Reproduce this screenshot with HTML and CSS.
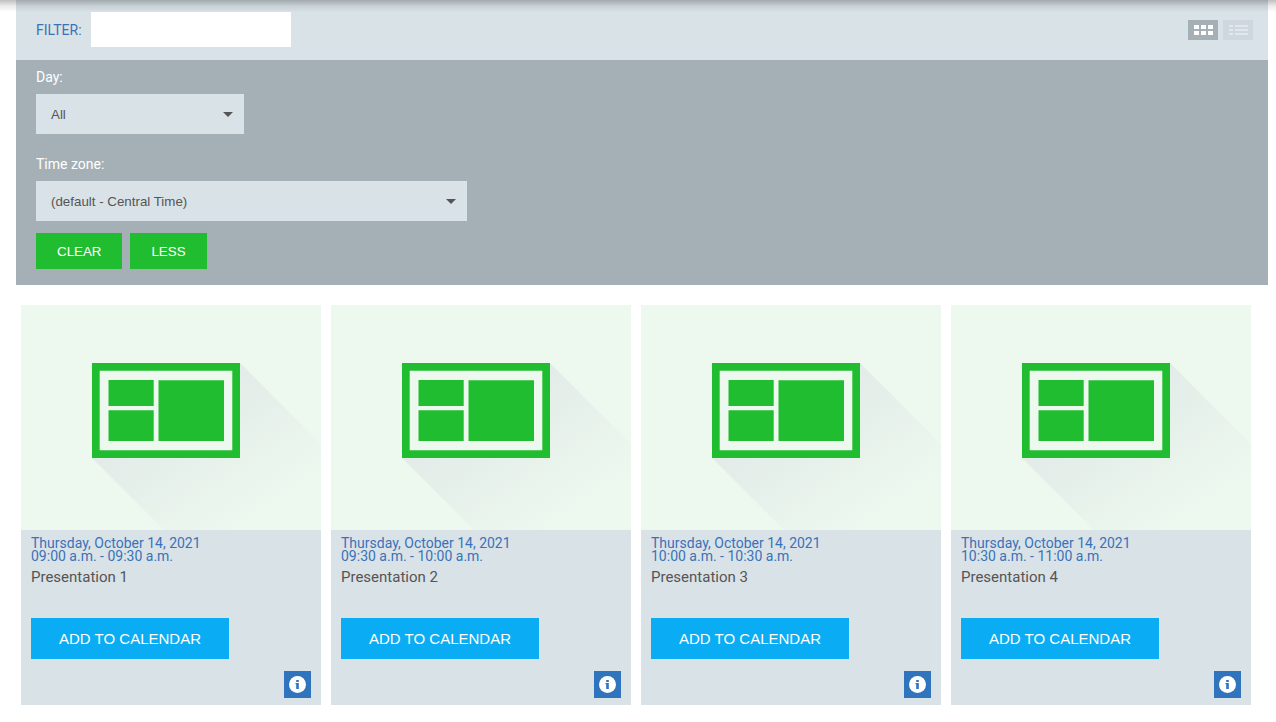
FILE: index.html
```html
<!DOCTYPE html>
<html lang="en">
<head>
<meta charset="utf-8">
<title>Presentations</title>
<link rel="stylesheet" href="styles.css">
</head>
<body>
<svg class="defs" aria-hidden="true">
  <defs>
    <linearGradient id="fade" gradientUnits="userSpaceOnUse" x1="145" y1="105" x2="225" y2="225">
      <stop offset="0" stop-color="#e2ebe8"/>
      <stop offset="1" stop-color="#edf9ef"/>
    </linearGradient>
    <symbol id="board" viewBox="0 0 300 225">
      <path fill="url(#fade)" d="M71 153 219 58 300 139V225H143z"/>
      <path fill="#21bd30" d="M71 58h148v95H71z"/>
      <path fill="#edf9ef" d="M78.700 65.700h132.600v79.600H78.700z"/>
      <path fill="#21bd30" d="M87.500 75h45.200v26H87.500zM87.500 105.200h45.200v30.800H87.500zM137.500 75.200h65.500v60.800h-65.500z"/>
    </symbol>
    <symbol id="info" viewBox="0 0 17 17">
      <circle cx="8.500" cy="8.500" r="8.500" fill="#fff"/>
      <path fill="#2f74bd" d="M7.200 4h2.600v2H7.200zM6.500 7h3.300v6H7.200V8.300h-.7z"/>
    </symbol>
  </defs>
</svg>
<div class="top-shadow"></div>
<main class="page">
  <header class="filter-bar">
    <label class="filter-label" for="filter">FILTER:</label>
    <input class="filter-input" id="filter" type="text">
    <div class="views">
      <button class="view view-active" type="button" aria-label="Grid view">
        <svg width="30" height="20" viewBox="0 0 30 20"><path fill="#fff" d="M6 5h5v4H6zM13 5h5v4h-5zM20 5h5v4h-5zM6 11h5v4H6zM13 11h5v4h-5zM20 11h5v4h-5z"/></svg>
      </button>
      <button class="view" type="button" aria-label="List view">
        <svg width="30" height="20" viewBox="0 0 30 20"><path fill="#e0e8ec" d="M6 5h4v2H6zM12 5h13v2H12zM6 9h4v2H6zM12 9h13v2H12zM6 13h4v2H6zM12 13h13v2H12z"/></svg>
      </button>
    </div>
  </header>
  <section class="options">
    <label class="option-label" for="day">Day:</label>
    <div class="select-box select-day"><select class="select" id="day"><option>All</option></select></div>
    <label class="option-label" for="zone">Time zone:</label>
    <div class="select-box select-zone"><select class="select" id="zone"><option>(default - Central Time)</option></select></div>
    <div class="actions">
      <button class="action" type="button">CLEAR</button>
      <button class="action" type="button">LESS</button>
    </div>
  </section>
  <section class="cards">
    <article class="card">
      <svg class="card-image" viewBox="0 0 300 225"><use href="#board"/></svg>
      <div class="card-body">
        <div class="card-time">Thursday, October 14, 2021<br>09:00 a.m. - 09:30 a.m.</div>
        <h2 class="card-title">Presentation 1</h2>
        <button class="add" type="button">ADD TO CALENDAR</button>
        <button class="info" type="button" aria-label="Details"><svg width="17" height="17"><use href="#info"/></svg></button>
      </div>
    </article>
    <article class="card">
      <svg class="card-image" viewBox="0 0 300 225"><use href="#board"/></svg>
      <div class="card-body">
        <div class="card-time">Thursday, October 14, 2021<br>09:30 a.m. - 10:00 a.m.</div>
        <h2 class="card-title">Presentation 2</h2>
        <button class="add" type="button">ADD TO CALENDAR</button>
        <button class="info" type="button" aria-label="Details"><svg width="17" height="17"><use href="#info"/></svg></button>
      </div>
    </article>
    <article class="card">
      <svg class="card-image" viewBox="0 0 300 225"><use href="#board"/></svg>
      <div class="card-body">
        <div class="card-time">Thursday, October 14, 2021<br>10:00 a.m. - 10:30 a.m.</div>
        <h2 class="card-title">Presentation 3</h2>
        <button class="add" type="button">ADD TO CALENDAR</button>
        <button class="info" type="button" aria-label="Details"><svg width="17" height="17"><use href="#info"/></svg></button>
      </div>
    </article>
    <article class="card">
      <svg class="card-image" viewBox="0 0 300 225"><use href="#board"/></svg>
      <div class="card-body">
        <div class="card-time">Thursday, October 14, 2021<br>10:30 a.m. - 11:00 a.m.</div>
        <h2 class="card-title">Presentation 4</h2>
        <button class="add" type="button">ADD TO CALENDAR</button>
        <button class="info" type="button" aria-label="Details"><svg width="17" height="17"><use href="#info"/></svg></button>
      </div>
    </article>
  </section>
</main>
</body>
</html>
```
FILE: styles.css
```css
* {
  box-sizing: border-box;
}

body {
  margin: 0;
  background: #fff;
  color: #555;
  font-family: Roboto, "Liberation Sans", sans-serif;
  font-size: 14px;
}

button,
input,
select {
  margin: 0;
  padding: 0;
  border: 0;
  border-radius: 0;
  font-family: "Liberation Sans", Arial, sans-serif;
}

button {
  cursor: pointer;
}

.defs {
  position: absolute;
  width: 0;
  height: 0;
}

.top-shadow {
  position: fixed;
  top: 0;
  left: 0;
  right: 0;
  height: 12px;
  background: linear-gradient(rgba(0, 0, 0, 0.25), rgba(0, 0, 0, 0.08) 50%, rgba(0, 0, 0, 0));
  pointer-events: none;
}

.page {
  margin: 0 8px 0 16px;
}

.filter-bar {
  display: flex;
  align-items: center;
  padding: 12px 15px 13px 20px;
  background: #d9e2e7;
}

.filter-label {
  margin-right: 9px;
  color: #3a72b8;
}

.filter-input {
  width: 200px;
  height: 35px;
  padding: 0 10px;
  background: #fff;
}

.views {
  display: flex;
  gap: 5px;
  margin-left: auto;
}

.view {
  display: flex;
  background: #cdd7dd;
}

.view-active {
  background: #a4b0b6;
}

.options {
  padding: 9px 20px 16px;
  background: #a4b0b6;
}

.option-label {
  display: block;
  margin-bottom: 9px;
  color: #fff;
  line-height: 16px;
}

.select-box {
  position: relative;
  max-width: 100%;
}

.select-box::after {
  content: "";
  position: absolute;
  top: 18px;
  right: 11px;
  border: 5px solid transparent;
  border-top-color: #555;
  border-bottom: 0;
  pointer-events: none;
}

.select-day {
  width: 208px;
  margin-bottom: 22px;
}

.select-zone {
  width: 431px;
  margin-bottom: 12px;
}

.select {
  display: block;
  width: 100%;
  height: 40px;
  padding: 0 30px 0 15px;
  appearance: none;
  background: #d9e2e7;
  color: #555;
}

.actions {
  display: flex;
  gap: 8px;
}

.action {
  height: 36px;
  padding: 0 21px;
  background: #21bd30;
  color: #fff;
}

.cards {
  display: flex;
  flex-wrap: wrap;
  gap: 10px;
  padding: 20px 5px;
}

.card {
  width: 300px;
  background: #d9e2e7;
}

.card-image {
  display: block;
  width: 100%;
  background: #edf9ef;
}

.card-body {
  display: flex;
  flex-direction: column;
  align-items: flex-start;
  padding: 7px 10px;
}

.card-time {
  color: #3a72b8;
  line-height: 13px;
}

.card-title {
  margin: 4px 0 31px;
  font-size: 15px;
  font-weight: 400;
  line-height: 20px;
}

.add {
  height: 41px;
  padding: 0 28px;
  background: #0aacf4;
  color: #fff;
  font-size: 15px;
}

.info {
  display: flex;
  align-self: flex-end;
  margin-top: 12px;
  padding: 5px;
  background: #2f74bd;
}
```
